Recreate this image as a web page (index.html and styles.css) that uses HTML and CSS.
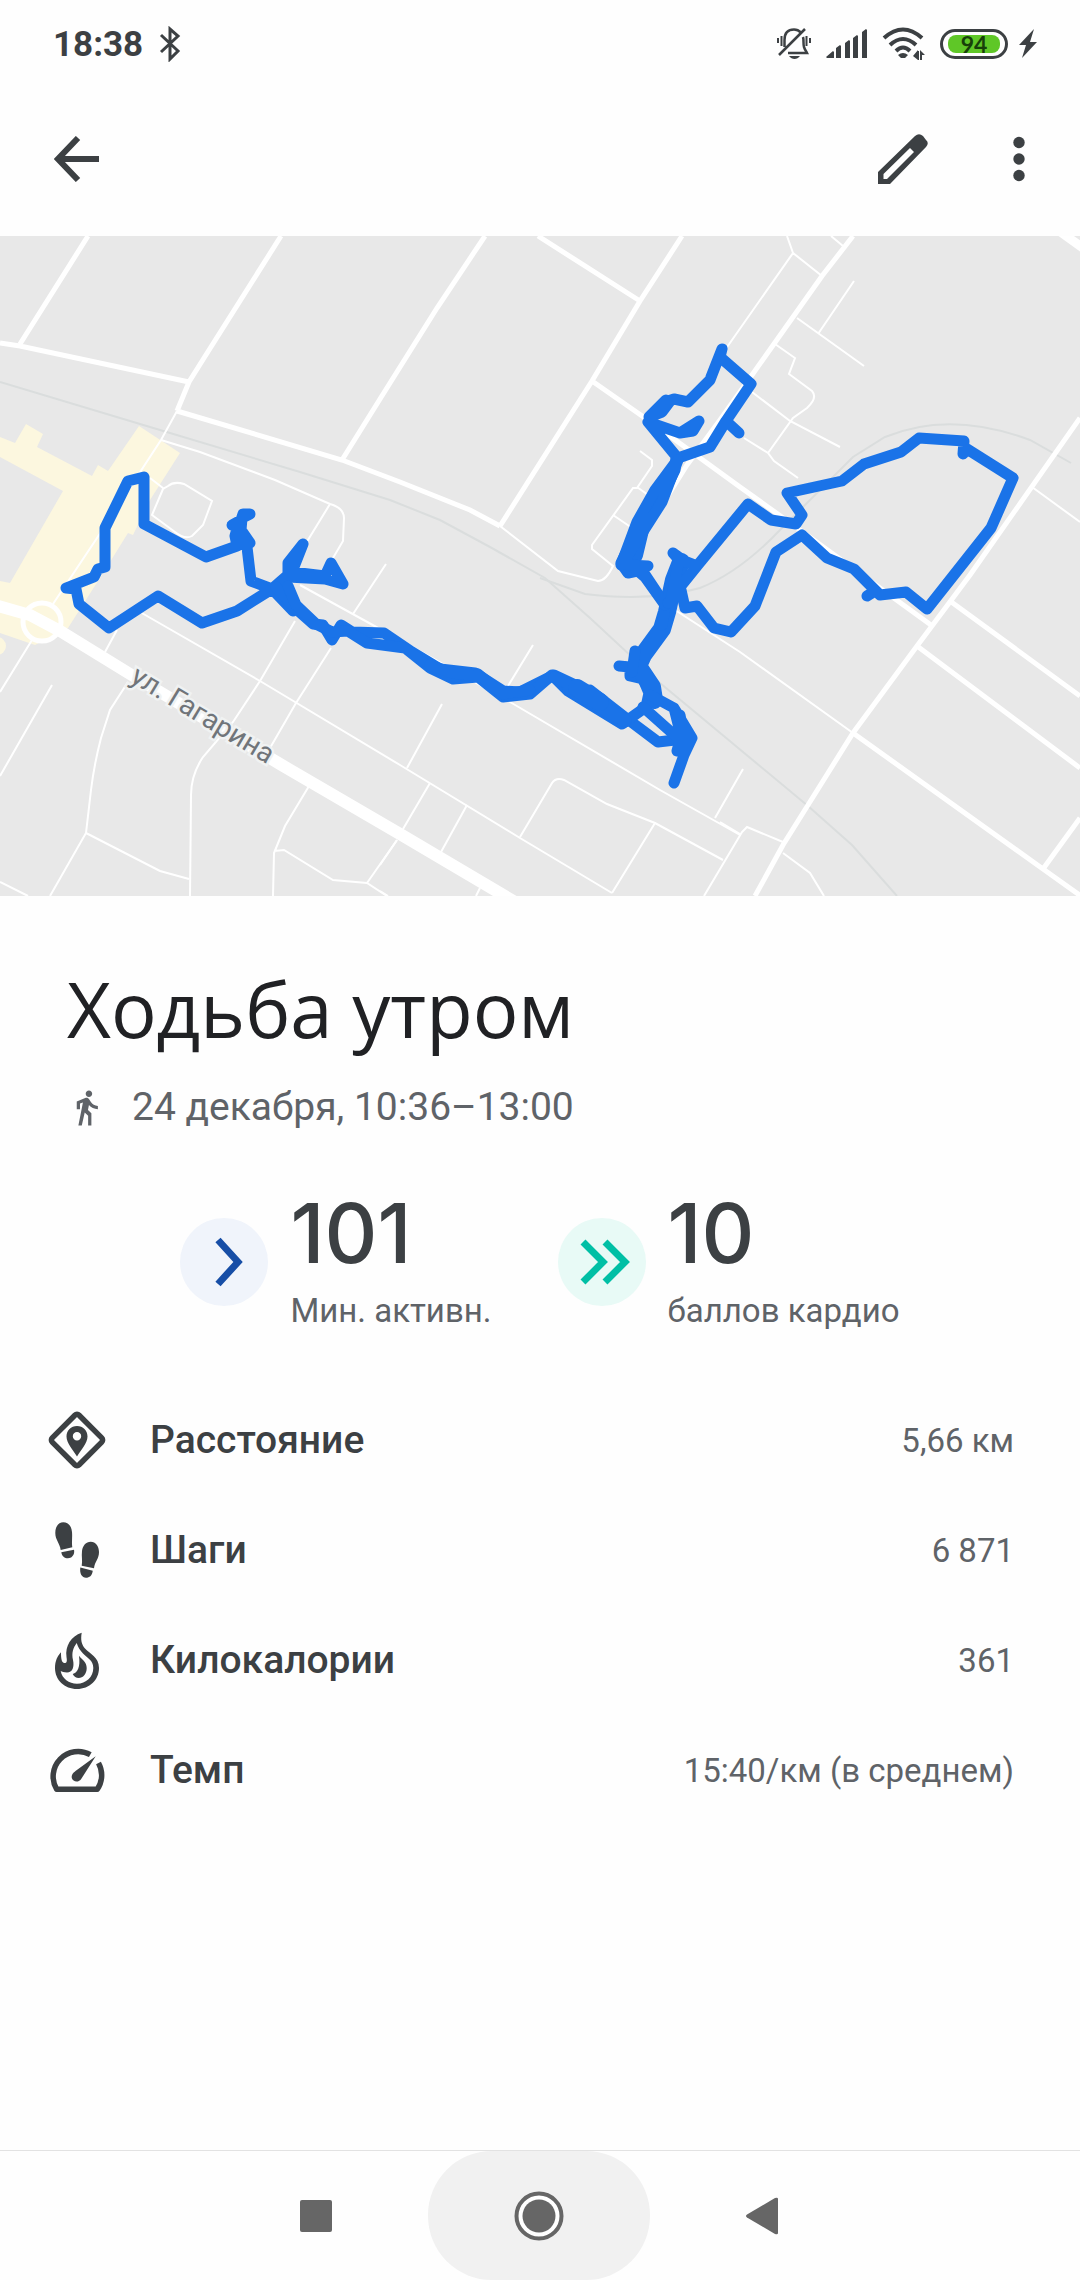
FILE: index.html
```html
<!DOCTYPE html>
<html lang="ru">
<head>
    <meta charset="UTF-8">
    <meta name="viewport" content="width=device-width, initial-scale=1.0">
    <title>Ходьба утром</title>
    <link rel="stylesheet" href="styles.css">
</head>
<body>
    <div class="status-bar">
        <span class="time">18:38</span>
        <svg class="bluetooth" width="22" height="36" viewBox="0 0 22 36"><path d="M2 9L19 25L11 33V3L19 10L2 26"/></svg>
        <div class="status-icons">
            <svg width="34" height="34" viewBox="0 0 34 34">
                <path class="line" d="M7.5 20V13C7.5 6 11 2.5 17 2.5c3 0 5 1 7 3M26 10c1 3 0 7 1 10 1 3 2 4 3 6H11M2 28L28 2" stroke-width="2.5"/>
                <path class="line" d="M1 11v5M4.5 9v10M29.5 9v10M33 11v5" stroke-width="2"/>
                <path d="M12 29h11c-3 4-8 4-11 0z"/>
            </svg>
            <svg class="signal" width="41" height="30" viewBox="0 0 41 30">
                <path d="M0 28L7 22 8 23V29H1zM10 19l4-3 1 1v12h-5zM19 14l4-3 1 1v17h-5zM27 9l4-3 1 1v22h-5zM36 3l4-3 1 1v28h-5z"/>
            </svg>
            <svg class="wifi" width="43" height="34" viewBox="0 0 43 34">
                <path class="line" d="M2 11Q21 -6 40 11M8 18Q21 6 34 18M14 24Q21 17 28 24" stroke-width="4"/>
                <path d="M16 28q5-4 10 0l-3 3h-4zM31 29l5-6v10zM36 24h1v9h-1zM38 23v10h2v-5h3z"/>
            </svg>
            <span class="battery"><span>94</span></span>
            <svg class="bolt" width="18" height="30" viewBox="0 0 18 30"><path d="M15 0L0 16h7L3 29 18 13h-7z"/></svg>
        </div>
    </div>

    <header class="toolbar">
        <button type="button" aria-label="Назад">
            <svg width="46" height="46" viewBox="0 0 46 46"><path class="line" d="M45 23H5M24 2L4 23l20 21" stroke-width="6"/></svg>
        </button>
        <button type="button" class="edit" aria-label="Изменить">
            <svg width="50" height="50" viewBox="0 0 50 50"><path fill-rule="evenodd" d="M0 38L37 2Q41 -1.5 45 2L48 6Q51.5 9 48 13L12 50H0zM5.500 40v5H9L36 18 32 14z"/></svg>
        </button>
        <button type="button" aria-label="Ещё">
            <svg width="12" height="46" viewBox="0 0 12 46"><circle cx="6" cy="6.500" r="5.700"/><circle cx="6" cy="23" r="5.700"/><circle cx="6" cy="39.500" r="5.700"/></svg>
        </button>
    </header>

    <svg class="map" viewBox="0 236 1080 660" role="img" aria-label="Маршрут">
        <rect class="land" x="0" y="236" width="1080" height="660"/>
        <path class="area" d="M0 437L15 443 26 424 43 434 37 447 92 476 98 465 108 471 139 426 180 453 150 500 133 535 128 533 105 570 68 628 35 645 0 633V581L10 583 63 491 0 457z"/>
        <circle class="area" cx="-3" cy="646" r="9"/>

        <!-- railway -->
        <path class="rail" d="M0 382L160 430 300 472 390 500 440 520 490 547 545 578 590 618 660 683 808 806 852 845 897 896"/>
        <path class="rail" d="M540 578L585 594Q650 602 700 588Q740 572 780 530L853 457 885 437Q950 410 1030 440L1071 463"/>

        <!-- streets -->
        <path class="street" d="M88 236L20 344M0 343L20 346 189 382M281 236L204 358 189 382 177 411M177 411L342 460 400 482 470 510 500 526M485 236L437 308 380 399 342 460"/>
        <path class="street" d="M682 236L640 301 592 381 500 526M538 236L640 301M592 381L645 418 740 487 800 530 931 625"/>
        <path class="street" d="M853 236L822 276 752 375 720 420 687 465 640 540M1080 418L970 575 917 646 853 733 808 805 783 845 755 896"/>
        <path class="street" d="M950 601L1080 696M917 646L1080 768M853 733L1043 869 1085 899M1043 869L1080 818"/>
        <path class="street wide" d="M1055 228L1090 253"/>

        <!-- lanes -->
        <path class="lane" d="M177 411L161 440 97 538 53 604M161 440L200 452 275 480 330 504Q344 508 344 518L343 541 320 580M330 504L300 553M150 478L163 488M163 489L152 515 175 532Q185 540 192 536L203 525 212 501 184 484Q174 481 168 486z"/>
        <path class="lane" d="M500 526L558 571 598 581Q606 581 613 566L592 549V545L633 488H637L652 466V460L640 451M637 487L655 500M613 515L635 530M675 610L740 652 853 733M1032 487L1080 522"/>
        <path class="lane" d="M32 640L0 692M52 685L0 776M128 682L110 710 101 738Q94 765 91 790T86 833L50 896M86 833L160 871 189 879M0 882L28 896M117 630L105 652M140 612L260 681 400 765 520 838 612 893"/>
        <path class="lane" d="M295 621L260 681 233 722 203 757Q191 775 191 795L190 896M331 648L296 703 270 748M309 786L285 826 274 853 273 896M274 851L284 850 333 880 367 883 387 896M397 840L367 883M386 564L353 614M300 585L400 640 510 702 660 790 740 835"/>
        <path class="lane" d="M533 645L508 686M442 704L407 768M430 783L403 829M467 805L441 852M397 840L380 865M480 888L476 896M380 891L388 896M520 837L552 783Q556 777 564 780L607 804 655 823 723 860M655 823L612 893M743 769L715 818M704 896L742 832 747 827 783 842M720 822L740 834M783 853L810 873 824 896"/>
        <path class="lane" d="M787 236L793 253 822 276M793 253L725 350M831 236L843 246M854 281L818 334M797 318L864 366M775 344L795 358 789 374 812 391Q818 398 807 408L793 418 768 453M752 392L790 421 840 447M744 438L768 453 774 461 798 478"/>
        <circle class="street" cx="42" cy="622" r="19"/>
        <path class="avenue" d="M-5 605L30 615 60 631 130 674 280 764 400 834 515 902"/>

        <path id="gagarin" class="label-path" d="M129 681L300 784"/>
        <text class="street-name"><textPath href="#gagarin">ул. Гагарина</textPath></text>

        <!-- recorded walk -->
        <path class="route" d="M272 589L237 611 202 623 158 596 109 628 79 604 76 589 66 588 94 577 98 569 105 567 105 528 128 481 144 477 144 524 206 557 237 546 235 536 238 525 232 525 241 520 243 514 250 514 242 518 241 530 250 543 237 540 247 547 251 581 272 589 288 575 288 563 303 544 292 572 325 576 331 563 343 584 325 579 288 577 272 589 293 611"/>
        <path class="route" d="M276 587L295 608 313 624 323 625 332 640 341 625 352 632 384 633 412 652 440 669 475 673 503 691 520 692 554 675 588 691 590 690 626 718 658 742 675 740"/>
        <path class="route" d="M288 586L296 605 316 624 332 632 348 631 367 643 405 648 430 668 453 679 478 677 503 697 530 694 552 675 568 691 622 724 646 707 649 693 643 679 630 676 630 667 619 666"/>
        <path class="route" d="M554 677L575 688 626 720M568 690L625 722M430 665L452 673 476 676M478 674L503 694 530 690"/>
        <path class="route thick" d="M638 666L643 655 662 629 667 612 674 580 681 562M640 669L652 687 654 700M577 688L600 702M640 530L634 555"/>
        <path class="route" d="M635 651L632 672M643 707L680 740 677 751 690 741M650 695L674 708 692 738 684 755 674 783M674 708L680 732M680 715L685 740M665 608L662 625"/>
        <path class="route" d="M662 600L642 570 628 573 621 563 640 524 660 500 675 470 676 456 648 422 665 402 674 399 688 402 710 380 722 349 720 357 751 384 726 421 710 447 678 458M722 349L711 377M726 421L739 433M648 422L680 433 693 431 699 421 680 433M666 400L649 417 662 412 671 400"/>
        <path class="route" d="M675 463L655 490 637 522 621 565 630 552 662 502 678 460M625 560L645 577 665 605M628 565L648 566"/>
        <path class="route" d="M673 553L684 561 697 566 748 504 771 520 796 524 802 515 787 493 842 481 864 464 901 452 919 438 964 441 963 454 967 449 1013 478 991 528 927 609 906 592 880 595 854 569 827 558 802 535 776 552 755 606 731 632 714 628 697 606 685 608 681 590 668 603M867 596L875 591M673 553L679 560 671 600M697 566L672 597"/>
    </svg>

    <main>
        <section class="summary">
            <h1>Ходьба утром</h1>
            <p class="date">
                <svg width="39" height="39" viewBox="0 0 24 24"><path d="M13.500 5.500c1.100 0 2-.9 2-2s-.9-2-2-2-2 .9-2 2 .9 2 2 2zM9.800 8.900L7 23h2.100l1.800-8 2.100 2v6h2v-7.500l-2.100-2 .6-3C14.800 12 16.800 13 19 13v-2c-1.900 0-3.500-1-4.300-2.400l-1-1.600c-.4-.6-1-1-1.700-1-.3 0-.5.1-.8.1L6 8.300V13h2V9.600l1.800-.7"/></svg>
                24 декабря, 10:36–13:00
            </p>
        </section>

        <section class="stats">
            <div class="stat">
                <svg width="88" height="88" viewBox="0 0 88 88"><circle cx="44" cy="44" r="44" fill="#f0f4fb"/><path d="M38 22L58 44 38 66" fill="none" stroke="#174ea6" stroke-width="7"/></svg>
                <div>
                    <strong>101</strong>
                    <span>Мин. активн.</span>
                </div>
            </div>
            <div class="stat">
                <svg width="88" height="88" viewBox="0 0 88 88"><circle cx="44" cy="44" r="44" fill="#e8faf6"/><path d="M25 24L45 44 25 64M47 24L67 44 47 64" fill="none" stroke="#00bfa5" stroke-width="7"/></svg>
                <div>
                    <strong>10</strong>
                    <span>баллов кардио</span>
                </div>
            </div>
        </section>

        <dl class="metrics">
            <div class="metric">
                <svg width="60" height="60" viewBox="0 0 60 60">
                    <rect class="line" x="11" y="11" width="38" height="38" rx="3" stroke-width="5.500" transform="rotate(45 30 30)"/>
                    <path fill-rule="evenodd" d="M30 16c-6 0-10.500 4.500-10.500 10.500C19.500 33 26 40 30 46.500 34 40 40.500 33 40.500 26.500 40.500 20.500 36 16 30 16zM30 22a4.200 4.200 0 1 1 0 8.400 4.200 4.200 0 0 1 0-8.400z"/>
                </svg>
                <dt>Расстояние</dt>
                <dd>5,66 км</dd>
            </div>
            <div class="metric">
                <svg width="60" height="60" viewBox="0 0 60 60">
                    <path d="M16.300 2.300C11 2.300 8.300 7 8.300 13c0 7 4.500 10 5.400 17l11.600-2.700C24.500 22 25.500 18 25 12c-.5-6-3.700-9.700-8.700-9.700zM14.300 32.300L27 29.700c1 5-2 8.600-6 8.600-3.500 0-6-2-6.700-6z"/>
                    <path d="M43.700 21.700c5 0 8.300 4.300 8.300 10.300 0 7-4.200 9.500-5 16.300l-12.300-2.600c1-5-.4-9 .3-14.700.7-5.600 4-9.300 8.700-9.300zM33.300 47.500l12.500 3.200c-.8 5-3.300 7-6.800 7-4 0-6.500-4-5.700-10.200z"/>
                </svg>
                <dt>Шаги</dt>
                <dd>6 871</dd>
            </div>
            <div class="metric">
                <svg width="60" height="60" viewBox="0 0 60 60">
                    <path fill-rule="evenodd" d="M34.700 2.700C33.500 10 34.500 14 38 18.500 43 24 52 27 52 38c0 12-9.500 21-22 21S8 50 8 38c0-7 2.500-12 6-15.700 0 6 .5 10.700 3.500 10.700 2.500 0 2.700-2 2-6C18 16 24 6 34.700 2.700zM29.700 13C26 18 24.500 23 26 30c1.500 7-.5 12.500-6 12.500-3 0-5-1-6.300-1.500C15 48.500 22 53.700 30 53.700c9 0 16.300-6.700 16.300-15.700 0-8-6.300-10-10.300-14.500-3-3.500-5-6-6.300-10.500z"/>
                    <path d="M32 25.700c3 4 7.700 6 7.700 12.300 0 6-3.700 10-8 10-2.500 0-4.700-1.500-6-4 5-1.500 7.800-7 6.300-18.300z"/>
                </svg>
                <dt>Килокалории</dt>
                <dd>361</dd>
            </div>
            <div class="metric">
                <svg width="60" height="60" viewBox="0 0 60 60">
                    <path class="line" d="M43.300 14.600A25 25 0 0 0 9.700 49.300H50.300A25 25 0 0 0 51.500 23" stroke-width="5.500" stroke-linejoin="round"/>
                    <path d="M48.700 16.300L34.500 38.500c-4 6.500-12.500 1.500-9-4.500 1-1.500 2-2 3-3z"/>
                </svg>
                <dt>Темп</dt>
                <dd>15:40/км (в среднем)</dd>
            </div>
        </dl>
    </main>

    <nav class="nav-bar">
        <button type="button" aria-label="Недавние">
            <svg width="32" height="32" viewBox="0 0 32 32"><rect width="32" height="32" rx="2"/></svg>
        </button>
        <button type="button" class="home" aria-label="Домой">
            <svg width="50" height="50" viewBox="0 0 50 50"><circle class="ring" cx="25" cy="25" r="22.500"/><circle cx="25" cy="25" r="16.500"/></svg>
        </button>
        <button type="button" aria-label="Назад">
            <svg width="32" height="38" viewBox="0 0 32 38"><path d="M1 17.500L29 1q3-1 3 1v34q0 2-3 1L1 20.500q-2-1.500 0-3z"/></svg>
        </button>
    </nav>
</body>
</html>
```
FILE: styles.css
```css
* {
    margin: 0;
    padding: 0;
    box-sizing: border-box;
}

body {
    display: flex;
    flex-direction: column;
    min-height: 100vh;
    font-family: Roboto, sans-serif;
    background-color: #fefefe;
    color: #3c4043;
}

svg {
    display: block;
    flex-shrink: 0;
    fill: #3c4043;
}

button {
    display: flex;
    align-items: center;
    justify-content: center;
    border: none;
    background: none;
    cursor: pointer;
}

.line {
    fill: none;
    stroke: #3c4043;
}

/* Status bar */
.status-bar {
    display: flex;
    align-items: center;
    height: 82px;
    padding: 6px 43px 0 53px;
}

.time {
    font-size: 35px;
    font-weight: 700;
}

.bluetooth {
    margin-left: 16px;
    fill: none;
    stroke: #3c4043;
    stroke-width: 3;
}

.status-icons {
    display: flex;
    align-items: center;
    gap: 15px;
    margin-left: auto;
}

.battery {
    width: 68px;
    height: 30px;
    padding: 3px 5px;
    border: 3px solid #3c4043;
    border-radius: 15px;
}

.battery span {
    display: block;
    height: 18px;
    border-radius: 8px;
    background-color: #5fc727;
    color: #17400a;
    font-family: Lato, sans-serif;
    font-size: 23px;
    font-weight: 700;
    line-height: 18px;
    text-align: center;
}

.bolt {
    margin-left: -4px;
}

/* Toolbar */
.toolbar {
    display: flex;
    align-items: center;
    height: 154px;
    padding: 0 55px 0 54px;
}

.toolbar .edit {
    margin-left: auto;
    margin-right: 85px;
}

/* Map */
.map {
    width: 100%;
}

.map .land {
    fill: #e8e8e8;
}

.map .area {
    fill: #fcf7df;
}

.map path:not(.area),
.map .street {
    fill: none;
    stroke: #ffffff;
    stroke-width: 5;
}

.map path.lane {
    stroke-width: 2;
}

.map path.wide {
    stroke-width: 9;
}

.map path.avenue {
    stroke-width: 12;
}

.map path.rail {
    stroke: #dadddd;
    stroke-width: 2;
}

.map path.label-path {
    stroke: none;
}

.map path.route {
    stroke: #1a73e8;
    stroke-width: 11;
    stroke-linecap: round;
    stroke-linejoin: round;
}

.map path.thick {
    stroke-width: 18;
}

.street-name {
    fill: #70757a;
    stroke: #f0f2f2;
    stroke-width: 5;
    paint-order: stroke;
    font-size: 28px;
}

/* Title and date */
.summary {
    padding: 65px 67px 0;
}

h1 {
    color: #202124;
    font-family: "Open Sans", sans-serif;
    font-size: 76px;
    font-weight: 400;
    line-height: 96px;
}

.date {
    display: flex;
    align-items: center;
    gap: 26px;
    margin-top: 28px;
    color: #5f6368;
    font-size: 39px;
    line-height: 44px;
}

.date svg {
    fill: #5f6368;
}

/* Activity points */
.stats {
    display: flex;
    justify-content: center;
    gap: 66px;
    margin-top: 64px;
}

.stat {
    display: flex;
    align-items: center;
    gap: 22px;
}

.stat strong,
.stat span {
    display: block;
}

.stat strong {
    font-family: Inter, sans-serif;
    font-size: 82px;
    font-weight: 500;
    line-height: 82px;
}

.stat span {
    color: #5f6368;
    font-size: 33px;
    line-height: 40px;
    padding-top: 16px;
}

/* Metrics list */
.metrics {
    padding: 54px 66px 0 47px;
}

.metric {
    display: flex;
    align-items: center;
    height: 110px;
}

.metric dt {
    margin-left: 43px;
    font-size: 39px;
    font-weight: 500;
}

.metric dd {
    margin-left: auto;
    color: #5f6368;
    font-size: 33px;
}

/* Navigation bar */
.nav-bar {
    display: flex;
    align-items: center;
    justify-content: center;
    gap: 96px;
    height: 130px;
    margin-top: auto;
    padding-right: 2px;
    border-top: 1px solid #e2e2e2;
}

.nav-bar svg {
    fill: #666666;
}

.nav-bar .home {
    width: 222px;
    height: 129px;
    border-radius: 64px;
    background-color: #f1f1f1;
}

.nav-bar .ring {
    fill: #ffffff;
    stroke: #666666;
    stroke-width: 4;
}
```
